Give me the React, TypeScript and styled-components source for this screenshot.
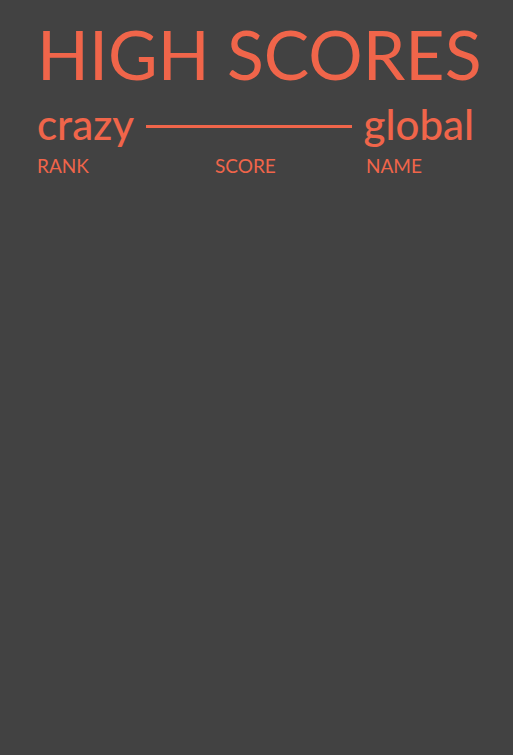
import { createGlobalStyle, styled } from "styled-components";

const COLORS = {
  bg: "#424242",
  accent: "#f0654a",
};

const GlobalStyle = createGlobalStyle`
  html, body {
    margin: 0;
    padding: 0;
    background: ${COLORS.bg};
  }
  body {
    font-family: Lato, "Liberation Sans", sans-serif;
    color: ${COLORS.accent};
  }
`;

const Page = styled.div`
  min-height: 755px;
  padding: 20px 33px 0 37px;
  box-sizing: border-box;
  background: ${COLORS.bg};
`;

const Title = styled.h1`
  margin: 0;
  font-size: 68px;
  font-weight: 400;
  line-height: 1;
  white-space: nowrap;
`;

const ModeRow = styled.div`
  display: flex;
  align-items: center;
  margin: 15px 6px 0 0;
  gap: 12px;
`;

const Mode = styled.span`
  font-size: 42px;
  font-weight: 500;
  line-height: 1;
`;

const Rule = styled.div`
  flex: 1;
  height: 3px;
  background: ${COLORS.accent};
  margin-top: 4px;
`;

const Columns = styled.div`
  display: grid;
  grid-template-columns: 178px 151px 1fr;
  margin-top: 11px;
`;

const ColumnLabel = styled.span`
  font-size: 19px;
  line-height: 1;
  text-transform: uppercase;
`;

export default function App() {
  return (
    <>
      <GlobalStyle />
      <Page>
        <Title>HIGH SCORES</Title>
        <ModeRow>
          <Mode>crazy</Mode>
          <Rule />
          <Mode>global</Mode>
        </ModeRow>
        <Columns>
          <ColumnLabel>Rank</ColumnLabel>
          <ColumnLabel>Score</ColumnLabel>
          <ColumnLabel>Name</ColumnLabel>
        </Columns>
      </Page>
    </>
  );
}
